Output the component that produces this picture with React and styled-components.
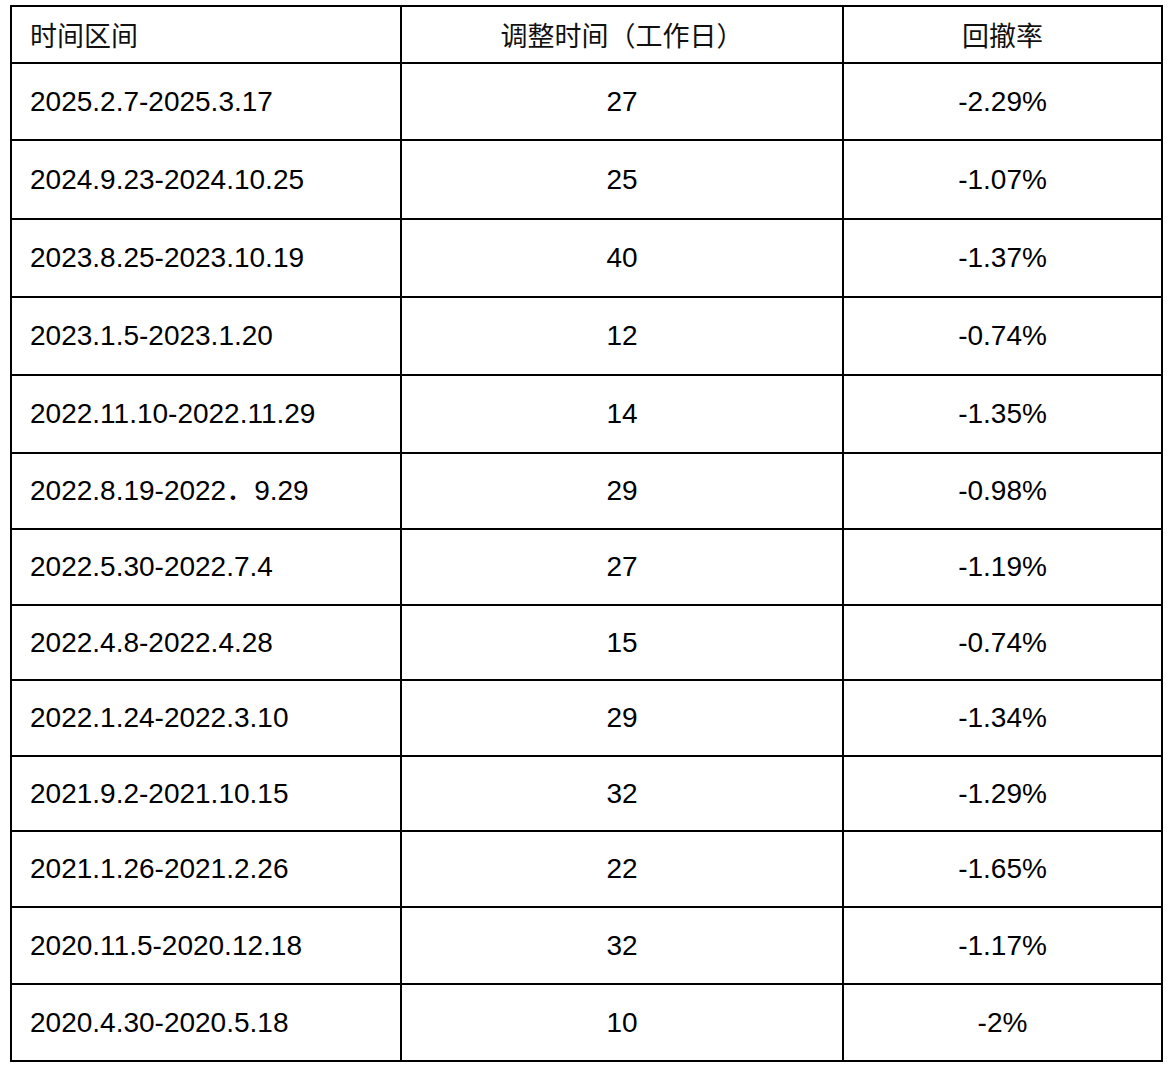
import React from 'react';
import styled, { createGlobalStyle } from 'styled-components';

const GlobalStyle = createGlobalStyle`
  html, body {
    margin: 0;
    padding: 0;
    background: #ffffff;
  }
  body {
    font-family: 'Liberation Sans', 'Noto Sans CJK SC', sans-serif;
    color: #000;
  }
`;

const Page = styled.div`
  padding: 5px 0 0 10px;
  width: 1174px;
  height: 1070px;
  box-sizing: border-box;
`;

const Table = styled.table`
  border-collapse: collapse;
  table-layout: fixed;
  width: 1151px;
  font-size: 28px;
  line-height: 1;
`;

const HeadCell = styled.th`
  border: 2px solid #000;
  height: 57px;
  padding: 0 18px;
  font-weight: 400;
  font-size: 27px;
  font-family: 'Noto Sans CJK SC', sans-serif;
  text-align: ${(p) => (p.$align === 'left' ? 'left' : 'center')};
  color: #111;
  box-sizing: border-box;
`;

const Row = styled.tr`
  height: ${(p) => p.$h}px;
`;

const Cell = styled.td`
  border: 2px solid #000;
  padding: 0 18px;
  text-align: ${(p) => (p.$align === 'left' ? 'left' : 'center')};
  vertical-align: middle;
  white-space: nowrap;
  box-sizing: border-box;
`;

const rows = [
  ['2025.2.7-2025.3.17', '27', '-2.29%', 77],
  ['2024.9.23-2024.10.25', '25', '-1.07%', 79],
  ['2023.8.25-2023.10.19', '40', '-1.37%', 78],
  ['2023.1.5-2023.1.20', '12', '-0.74%', 78],
  ['2022.11.10-2022.11.29', '14', '-1.35%', 78],
  ['2022.8.19-2022．9.29', '29', '-0.98%', 76],
  ['2022.5.30-2022.7.4', '27', '-1.19%', 76],
  ['2022.4.8-2022.4.28', '15', '-0.74%', 75],
  ['2022.1.24-2022.3.10', '29', '-1.34%', 76],
  ['2021.9.2-2021.10.15', '32', '-1.29%', 75],
  ['2021.1.26-2021.2.26', '22', '-1.65%', 76],
  ['2020.11.5-2020.12.18', '32', '-1.17%', 77],
  ['2020.4.30-2020.5.18', '10', '-2%', 77],
];

export default function App() {
  return (
    <>
      <GlobalStyle />
      <Page>
        <Table>
          <colgroup>
            <col style={{ width: 390 }} />
            <col style={{ width: 442 }} />
            <col style={{ width: 319 }} />
          </colgroup>
          <thead>
            <tr>
              <HeadCell $align="left">时间区间</HeadCell>
              <HeadCell>调整时间（工作日）</HeadCell>
              <HeadCell>回撤率</HeadCell>
            </tr>
          </thead>
          <tbody>
            {rows.map(([range, days, drawdown, h], i) => (
              <Row key={i} $h={h}>
                <Cell $align="left">{range}</Cell>
                <Cell>{days}</Cell>
                <Cell>{drawdown}</Cell>
              </Row>
            ))}
          </tbody>
        </Table>
      </Page>
    </>
  );
}
